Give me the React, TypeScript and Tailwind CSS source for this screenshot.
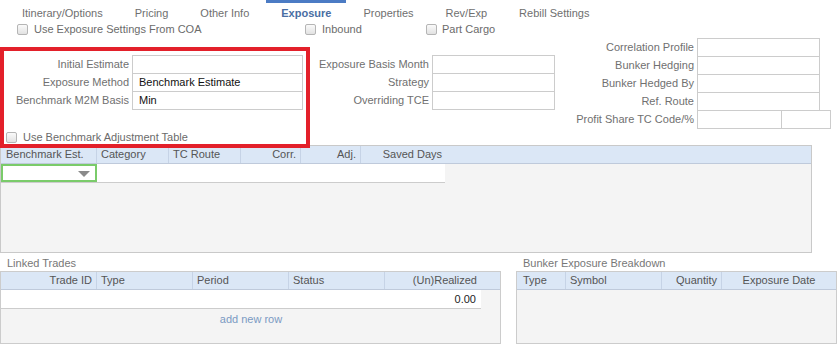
import React from "react";

const Check = () => (
  <span className="inline-block w-[11px] h-[11px] rounded-[2px] border border-[#b5b5b5] bg-gradient-to-b from-[#fafafa] to-[#e2e2e2] shrink-0" />
);

const tabs = ["Itinerary/Options", "Pricing", "Other Info", "Exposure", "Properties", "Rev/Exp", "Rebill Settings"];

function Field({ label, value, labelW, inputW, split }: { label: string; value?: string; labelW: number; inputW: number; split?: boolean }) {
  return (
    <div className="flex h-[18px] items-start">
      <div className="text-right pr-[3px] leading-[18px] text-[#707070]" style={{ width: labelW }}>{label}</div>
      {split ? (
        <div className="flex">
          <div className="h-[19px] w-[85px] border border-[#cccccc] bg-white" />
          <div className="h-[19px] w-[49px] border border-l-0 border-[#cccccc] bg-white" />
        </div>
      ) : (
        <div className="h-[19px] border border-[#cccccc] bg-white pl-[6px] leading-[17px] text-[#111]" style={{ width: inputW }}>{value}</div>
      )}
    </div>
  );
}

export default function App() {
  return (
    <div className="relative w-[837px] h-[344px] bg-white overflow-hidden text-[11px]" style={{ fontFamily: '"Liberation Sans", Arial, sans-serif' }}>
      {/* Tabs */}
      <div className="flex h-[25px] pl-[6px]">
        {tabs.map((t) =>
          t === "Exposure" ? (
            <div key={t} className="px-[15px] mx-[1px] h-[25px] border-t-[3px] border-[#4b7bc4] font-bold text-[#4a6ea3] leading-[21px]">
              {t}
            </div>
          ) : (
            <div key={t} className="px-[16px] h-[25px] leading-[27px] text-[#6f6f6f]">
              {t}
            </div>
          )
        )}
      </div>
      {/* checkboxes row */}
      <div className="flex items-center h-[9px] text-[#6b6b6b]">
        <div className="flex items-center gap-[6px] pl-[17px] w-[305px]"><Check /><span>Use Exposure Settings From COA</span></div>
        <div className="flex items-center gap-[6px] w-[121px]"><Check /><span>Inbound</span></div>
        <div className="flex items-center gap-[5px]"><Check /><span>Part Cargo</span></div>
      </div>
      {/* Form */}
      <div className="flex h-[90px] mt-[4px]">
        <div className="pt-[17px]">
          <Field label="Initial Estimate" labelW={132} inputW={171} />
          <Field label="Exposure Method" value="Benchmark Estimate" labelW={132} inputW={171} />
          <Field label="Benchmark M2M Basis" value="Min" labelW={132} inputW={171} />
        </div>
        <div className="pt-[17px]">
          <Field label="Exposure Basis Month" labelW={129} inputW={123} />
          <Field label="Strategy" labelW={129} inputW={123} />
          <Field label="Overriding TCE" labelW={129} inputW={123} />
        </div>
        <div>
          <Field label="Correlation Profile" labelW={142} inputW={123} />
          <Field label="Bunker Hedging" labelW={142} inputW={123} />
          <Field label="Bunker Hedged By" labelW={142} inputW={123} />
          <Field label="Ref. Route" labelW={142} inputW={123} />
          <Field label="Profit Share TC Code/%" labelW={142} inputW={123} split />
        </div>
      </div>
      <div className="flex items-center gap-[6px] pl-[6px] pt-[2px] h-[17px] text-[#6b6b6b]"><Check /><span>Use Benchmark Adjustment Table</span></div>
      {/* Benchmark grid */}
      <div className="w-[812px] h-[108px] border border-[#c9c9c9] bg-[#f4f4f4]">
        <div className="flex h-[18px] bg-[#dbe7f6] border-b border-[#bfcadb] text-[#555] leading-[17px]">
          <div className="w-[96px] pl-[5px] border-r border-[#c6d3e6]">Benchmark Est.</div>
          <div className="w-[72px] pl-[4px] border-r border-[#c6d3e6]">Category</div>
          <div className="w-[72px] pl-[4px] border-r border-[#c6d3e6]">TC Route</div>
          <div className="w-[60px] pr-[4px] text-right border-r border-[#c6d3e6]">Corr.</div>
          <div className="w-[60px] pr-[4px] text-right border-r border-[#c6d3e6]">Adj.</div>
          <div className="w-[84px] pr-[3px] text-right">Saved Days</div>
        </div>
        <div className="flex h-[19px] w-[444px] bg-white border-b border-[#cccccc]">
          <div className="relative w-[96px] h-[18px] border-2 border-[#7acb6a] bg-white">
            <span className="absolute right-[5px] top-[5px] w-0 h-0 border-l-[6px] border-r-[6px] border-t-[6px] border-l-transparent border-r-transparent border-t-[#8a8a8a]" />
          </div>
        </div>
      </div>
      {/* bottom */}
      <div className="flex mt-[3px]">
        <div className="w-[501px]">
          <div className="h-[15px] pl-[7px] leading-[14px] text-[#777]">Linked Trades</div>
          <div className="h-[73px] border border-[#cccccc] bg-[#f4f4f4]">
            <div className="flex h-[18px] w-[499px] bg-[#dbe7f6] border-b border-[#bfcadb] text-[#555] leading-[17px]">
              <div className="w-[96px] pr-[4px] text-right border-r border-[#c6d3e6]">Trade ID</div>
              <div className="w-[96px] pl-[4px] border-r border-[#c6d3e6]">Type</div>
              <div className="w-[96px] pl-[4px] border-r border-[#c6d3e6]">Period</div>
              <div className="w-[96px] pl-[4px] border-r border-[#c6d3e6]">Status</div>
              <div className="w-[96px] pr-[4px] text-right">(Un)Realized</div>
            </div>
            <div className="h-[19px] w-[480px] bg-white border-b border-[#cccccc] text-right pr-[5px] leading-[18px] text-[#222]">0.00</div>
            <div className="text-center w-[500px] leading-[20px] text-[#7b9ac3]">add new row</div>
          </div>
        </div>
        <div className="ml-[15px] w-[321px]">
          <div className="h-[15px] pl-[7px] leading-[14px] text-[#777]">Bunker Exposure Breakdown</div>
          <div className="h-[73px] border border-[#cccccc] bg-[#f4f4f4]">
            <div className="flex h-[18px] bg-[#dbe7f6] border-b border-[#bfcadb] text-[#555] leading-[17px]">
              <div className="w-[49px] pl-[6px] border-r border-[#c6d3e6]">Type</div>
              <div className="w-[96px] pl-[4px] border-r border-[#c6d3e6]">Symbol</div>
              <div className="w-[60px] pr-[4px] text-right border-r border-[#c6d3e6]">Quantity</div>
              <div className="flex-1 text-center">Exposure Date</div>
            </div>
          </div>
        </div>
      </div>
      {/* Red highlight overlay */}
      <div className="absolute left-0 top-[47px] w-[310px] h-[101px] border-4 border-[#e3202a] pointer-events-none" />
    </div>
  );
}
